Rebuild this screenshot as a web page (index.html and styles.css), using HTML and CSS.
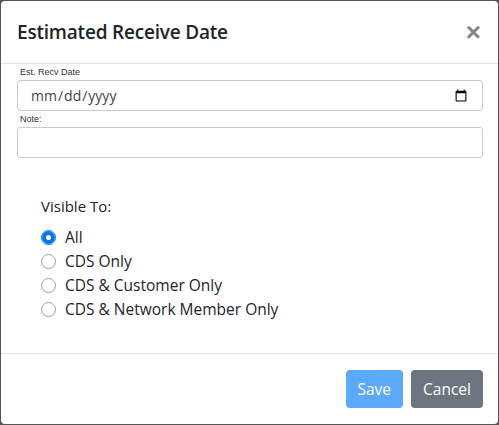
FILE: index.html
```html
<!DOCTYPE html>
<html lang="en">

<head>
    <meta charset="UTF-8">
    <meta name="viewport" content="width=device-width, initial-scale=1.0">
    <title>Estimated Receive Date</title>
    <link rel="stylesheet" href="styles.css">
</head>

<body>

    <div class="modal">
        <!-- Header -->
        <div class="modal-header">
            <h5 class="modal-title">Estimated Receive Date</h5>
            <button type="button" class="close">&times;</button>
        </div>

        <!-- Body -->
        <div class="modal-body">
            <div class="form-group">
                <label for="recvDate">Est. Recv Date</label>
                <input type="date" id="recvDate" class="form-control">
            </div>
            <div class="form-group">
                <label for="note">Note:</label>
                <input type="text" id="note" class="form-control">
            </div>

            <div class="visible-to">
                <div class="visible-title">Visible To:</div>
                <label class="radio"><input type="radio" name="visibleTo" value="all" checked> All</label>
                <label class="radio"><input type="radio" name="visibleTo" value="cds"> CDS Only</label>
                <label class="radio"><input type="radio" name="visibleTo" value="customer"> CDS &amp; Customer Only</label>
                <label class="radio"><input type="radio" name="visibleTo" value="network"> CDS &amp; Network Member Only</label>
            </div>
        </div>

        <!-- Footer -->
        <div class="modal-footer">
            <button type="button" class="btn btn-primary" disabled>Save</button>
            <button type="button" class="btn btn-secondary">Cancel</button>
        </div>
    </div>

</body>

</html>
```

FILE: styles.css
```css
* {
    box-sizing: border-box;
}

body {
    margin: 0;
    background-color: #555;
    font-family: "Open Sans", "Noto Sans", sans-serif;
    color: #212529;
}

.modal {
    margin: 1px;
    height: 423px;
    background-color: #fff;
    border-radius: 4px;
    display: flex;
    flex-direction: column;
}

.modal-header {
    display: flex;
    align-items: center;
    justify-content: space-between;
    height: 63px;
    padding: 0 16px;
    border-bottom: 1px solid #e3e3e3;
}

.modal-title {
    margin: 0;
    font-size: 19px;
    font-weight: 600;
    letter-spacing: -0.2px;
}

.close {
    border: none;
    background: none;
    padding: 0;
    font-size: 26px;
    font-weight: 700;
    line-height: 1;
    color: #858585;
    margin-right: 1px;
    cursor: pointer;
}

.modal-body {
    flex: 1;
    padding: 3px 15px 0 16px;
}

.form-group {
    margin-bottom: 3px;
}

.form-group label {
    display: block;
    font-family: "Liberation Sans", Arial, sans-serif;
    font-size: 9px;
    color: #333;
    margin: 0 0 3px 3px;
}

.form-control {
    display: block;
    width: 100%;
    height: 31px;
    padding: 4px 12px;
    font-family: "Open Sans", sans-serif;
    font-size: 14px;
    color: #444;
    border: 1px solid #ccc;
    border-radius: 3px;
}

.visible-to {
    padding: 35px 0 0 24px;
}

.visible-title {
    font-size: 15px;
    margin-bottom: 9px;
}

.radio {
    display: flex;
    align-items: center;
    gap: 9px;
    height: 24px;
    font-size: 15.5px;
}

.radio input {
    appearance: none;
    width: 15px;
    height: 15px;
    margin: 0;
    border: 1px solid #a0a0a0;
    border-radius: 50%;
    background-color: #fff;
}

.radio input:checked {
    border-color: #0a74e8;
    box-shadow: inset 0 0 0 4px #0a74e8;
}

.modal-footer {
    display: flex;
    justify-content: flex-end;
    gap: 8px;
    height: 71px;
    padding: 16px 15px 0;
    border-top: 1px solid #e3e3e3;
}

.btn {
    height: 38px;
    padding: 0 12px;
    border: none;
    border-radius: 4px;
    font-family: "Open Sans", sans-serif;
    font-size: 15.5px;
    color: #fff;
}

.btn-primary {
    background-color: #5ca8fb;
}

.btn-secondary {
    background-color: #6c757d;
}
```
